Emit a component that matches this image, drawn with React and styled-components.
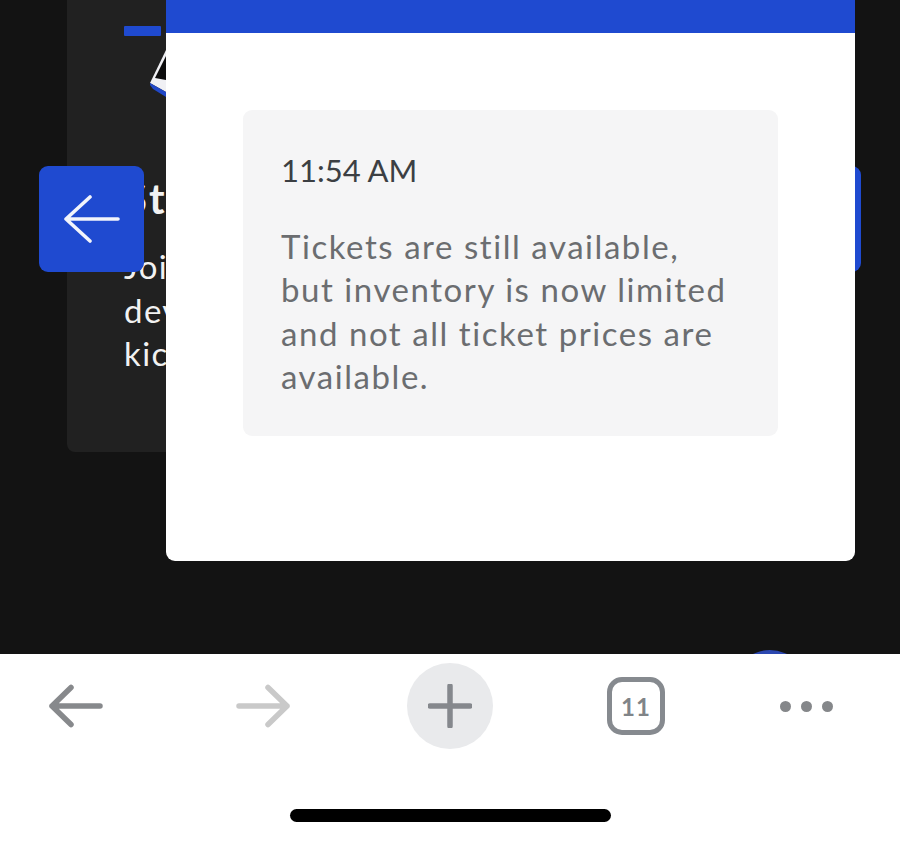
import React from "react";
import styled, { createGlobalStyle } from "styled-components";

const Global = createGlobalStyle`
  html, body { margin: 0; padding: 0; background: #fff; }
  body { font-family: "Lato", "Liberation Sans", sans-serif; }
  * { box-sizing: border-box; }
`;

const Screen = styled.div`
  width: 900px;
  height: 841px;
  display: flex;
  flex-direction: column;
  overflow: hidden;
  background: #fff;
`;

const Stage = styled.main`
  position: relative;
  height: 654px;
  padding-left: 67px;
  background: #131313;
  overflow: hidden;
  flex: none;
`;

const BackCard = styled.section`
  width: 700px;
  height: 452px;
  padding: 26px 0 0 57px;
  background: #212121;
  border-radius: 0 0 8px 8px;
  color: #f2f2f2;
`;

const AccentBar = styled.div`
  width: 37px;
  height: 10px;
  border-radius: 1px;
  background: #1f4ad0;
`;

const Illustration = styled.svg`
  display: block;
  width: 60px;
  height: 50px;
  margin: 14px 0 0 26px;
`;

const CardTitle = styled.h2`
  margin: 75px 0 0;
  font-size: 42px;
  line-height: 46px;
  font-weight: 700;
  letter-spacing: 3px;
  white-space: nowrap;
`;

const CardBody = styled.p`
  margin: 24px 0 0;
  font-size: 33px;
  line-height: 43.5px;
  font-weight: 400;
  letter-spacing: 1.4px;
  white-space: pre;
`;

const Modal = styled.section`
  position: absolute;
  left: 166px;
  top: 0;
  width: 689px;
  height: 561px;
  display: flex;
  flex-direction: column;
  background: #fff;
  border-radius: 0 0 9px 9px;
  z-index: 2;
`;

const ModalBar = styled.div`
  height: 33px;
  flex: none;
  background: #1f4ad0;
`;

const Notice = styled.div`
  width: 535px;
  height: 326px;
  margin: 77px 0 0 77px;
  padding: 38px 38px 0;
  background: #f5f5f6;
  border-radius: 9px;
`;

const Time = styled.div`
  font-size: 31px;
  line-height: 44px;
  color: #3c3f43;
`;

const Message = styled.p`
  margin: 33px 0 0;
  font-size: 33px;
  line-height: 43.4px;
  color: #6b6d70;
  letter-spacing: 1.55px;
  white-space: pre;
`;

const NavButton = styled.button`
  position: absolute;
  top: 166px;
  left: ${(p) => p.$left}px;
  width: 105px;
  height: 106px;
  padding: 0;
  display: flex;
  align-items: center;
  justify-content: center;
  border: 0;
  border-radius: 9px;
  background: #1f4ad0;
  z-index: ${(p) => p.$z};
`;

const PeekDot = styled.div`
  position: absolute;
  left: 732px;
  top: 650px;
  width: 76px;
  height: 76px;
  border-radius: 50%;
  background: #2b47b0;
`;

const Toolbar = styled.nav`
  height: 109px;
  flex: none;
  padding-top: 9px;
  display: grid;
  grid-template-columns: 152px 221px 154px 218px 122px;
  align-items: start;
  background: #fff;
  position: relative;
`;

const ToolSlot = styled.div`
  height: 86px;
  display: flex;
  align-items: center;
  justify-content: center;
`;

const PlusCircle = styled.div`
  width: 86px;
  height: 86px;
  border-radius: 50%;
  display: flex;
  align-items: center;
  justify-content: center;
  background: #e9eaec;
`;

const TabCount = styled.div`
  width: 58px;
  height: 58px;
  display: flex;
  align-items: center;
  justify-content: center;
  border: 5px solid #868a8f;
  border-radius: 15px;
  color: #808488;
  font-size: 24px;
  font-weight: 700;
  letter-spacing: 1px;
`;

const Dots = styled.div`
  display: flex;
  gap: 10px;
`;

const Dot = styled.span`
  width: 11px;
  height: 11px;
  border-radius: 50%;
  background: #85878a;
`;

const HomeRow = styled.div`
  flex: 1;
  display: flex;
  justify-content: center;
  padding-top: 46px;
  background: #fff;
`;

const HomeIndicator = styled.div`
  width: 321px;
  height: 13px;
  margin-left: 1px;
  border-radius: 7px;
  background: #000;
`;

const ToolArrow = ({ color, flip }) => (
  <svg width="56" height="46" viewBox="0 0 56 46" fill="none"
       style={flip ? { transform: "scaleX(-1)" } : undefined}>
    <path d="M4 23H52M23 4.5L4 23L23 41.5" stroke={color} strokeWidth="5.5"
          strokeLinecap="round" strokeLinejoin="round" />
  </svg>
);

export default function App() {
  return (
    <Screen>
      <Global />
      <Stage>
        <BackCard>
          <AccentBar />
          <Illustration viewBox="0 0 60 50">
            <path d="M16 0L0 33L16 42V0Z" fill="#f0f0f4" />
            <path d="M16 6L5 28L16 30Z" fill="#0d0d0d" />
            <path d="M0 33L16 42V47L3 39L0 35Z" fill="#2148c8" />
          </Illustration>
          <CardTitle>St</CardTitle>
          <CardBody>{"Joi\ndev\nkic"}</CardBody>
        </BackCard>

        <NavButton $left={39} $z={3} aria-label="Previous">
          <svg width="56" height="48" viewBox="0 0 56 48" fill="none">
            <path d="M2 24H54M26 2L2 24L26 46" stroke="#f2f4fb" strokeWidth="3.6"
                  strokeLinecap="round" strokeLinejoin="round" />
          </svg>
        </NavButton>
        <NavButton $left={756} $z={1} aria-label="Next" />

        <Modal>
          <ModalBar />
          <Notice>
            <Time>11:54 AM</Time>
            <Message>{"Tickets are still available,\nbut inventory is now limited\nand not all ticket prices are\navailable."}</Message>
          </Notice>
        </Modal>

        <PeekDot />
      </Stage>

      <Toolbar>
        <ToolSlot><ToolArrow color="#87898c" /></ToolSlot>
        <ToolSlot><ToolArrow color="#c9c9c9" flip /></ToolSlot>
        <ToolSlot>
          <PlusCircle>
            <svg width="44" height="44" viewBox="0 0 44 44" fill="none">
              <path d="M22 2V42M2 22H42" stroke="#85888d" strokeWidth="5.5" strokeLinecap="round" />
            </svg>
          </PlusCircle>
        </ToolSlot>
        <ToolSlot><TabCount>11</TabCount></ToolSlot>
        <ToolSlot>
          <Dots><Dot /><Dot /><Dot /></Dots>
        </ToolSlot>
      </Toolbar>

      <HomeRow><HomeIndicator /></HomeRow>
    </Screen>
  );
}
